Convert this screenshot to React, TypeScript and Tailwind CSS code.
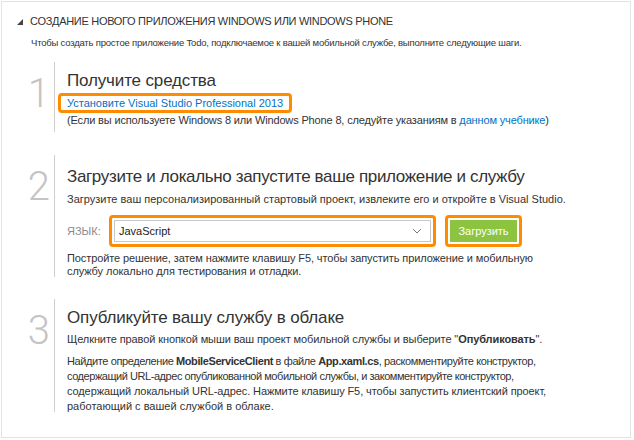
import React from 'react';

const font = { fontFamily: '"Liberation Sans", Arial, sans-serif' };

function Step({ n, children, lineH, pt }: { n: string; children: React.ReactNode; lineH: string; pt: string }) {
  return (
    <div className="flex">
      <div className={`w-[39px] shrink-0 border-r border-[#cfcfcf] pr-[4px] text-right ${lineH}`}>
        <span
          className="inline-block mt-[10px] text-[40px] font-light leading-[44px] text-[#c4c4c4]"
          style={{ fontFamily: 'Roboto, sans-serif' }}
        >
          {n}
        </span>
      </div>
      <div className={`pl-[12px] ${pt} text-[11px] leading-[14px] text-[#333]`}>{children}</div>
    </div>
  );
}

export default function App() {
  return (
    <div className="w-[634px] h-[440px] bg-white p-[1px]" style={font}>
      <div className="h-[437px] w-[630px] border border-[#e3e3e3] pl-[14px] pt-[10px]">
        <div className="flex items-center gap-[6px] text-[11px] leading-[18px] tracking-[-0.3px] text-[#333]">
          <svg width="8" height="8" viewBox="0 0 8 8" className="mt-[1px]">
            <polygon points="7,1 7,7 1,7" fill="#444" />
          </svg>
          <span>СОЗДАНИЕ НОВОГО ПРИЛОЖЕНИЯ WINDOWS ИЛИ WINDOWS PHONE</span>
        </div>
        <p className="pl-[15px] mt-[6px] whitespace-nowrap text-[9.5px] leading-[14px] tracking-[-0.2px] text-[#333]">
          Чтобы создать простое приложение Todo, подключаемое к вашей мобильной службе, выполните следующие шаги.
        </p>

        <div className="mt-[12px] flex flex-col">
          <Step n="1" lineH="h-[70px]" pt="pt-[8px]">
            <h2 className="text-[17px] leading-[22px] tracking-[-0.15px] text-[#333]">Получите средства</h2>
            <div className="mt-[1px] -ml-[9px] inline-block rounded-[4px] border-[3px] border-[#ff8c00] px-[6px] leading-[14px] text-[#0072c6]">
              Установите Visual Studio Professional 2013
            </div>
            <p className="whitespace-nowrap tracking-[-0.15px]">
              (Если вы используете Windows 8 или Windows Phone 8, следуйте указаниям в{' '}
              <span className="text-[#0072c6]">данном учебнике</span>)
            </p>
          </Step>

          <div className="h-[23px]" />

          <Step n="2" lineH="h-[122px]" pt="pt-[11px]">
            <h2 className="text-[17px] leading-[22px] tracking-[-0.35px] text-[#333]">
              Загрузите и локально запустите ваше приложение и службу
            </h2>
            <p className="mt-[4px] whitespace-nowrap">
              Загрузите ваш персонализированный стартовый проект, извлеките его и откройте в Visual Studio.
            </p>
            <div className="mt-[9px] flex items-center">
              <span className="w-[42px] text-[#8a8a8a]">ЯЗЫК:</span>
              <div className="rounded-[4px] border-[3px] border-[#ff8c00] p-[2px]">
                <div className="flex h-[22px] w-[317px] items-center justify-between border border-[#c8c8c8] bg-white pl-[4px] pr-[8px] text-[#222]">
                  <span>JavaScript</span>
                  <svg width="10" height="6" viewBox="0 0 10 6">
                    <polyline points="1,1 5,5 9,1" fill="none" stroke="#777" strokeWidth="1" />
                  </svg>
                </div>
              </div>
              <div className="ml-[9px] rounded-[4px] border-[3px] border-[#ff8c00] p-[2px]">
                <div className="flex h-[22px] w-[67px] items-center justify-center bg-[#8cc43f] text-white">Загрузить</div>
              </div>
            </div>
            <p className="mt-[5px] whitespace-nowrap leading-[13px] tracking-[-0.1px]">
              Постройте решение, затем нажмите клавишу F5, чтобы запустить приложение и мобильную
              <br />
              службу локально для тестирования и отладки.
            </p>
          </Step>

          <div className="h-[21px]" />

          <Step n="3" lineH="h-[113px]" pt="pt-[8px]">
            <h2 className="text-[17px] leading-[22px] tracking-[-0.15px] text-[#333]">Опубликуйте вашу службу в облаке</h2>
            <p className="mt-[3px] whitespace-nowrap tracking-[-0.1px]">
              Щелкните правой кнопкой мыши ваш проект мобильной службы и выберите "<b>Опубликовать</b>".
            </p>
            <div className="mt-[8px] whitespace-nowrap leading-[15px]">
              <p className="tracking-[-0.4px]">
                Найдите определение <b>MobileServiceClient</b> в файле <b>App.xaml.cs</b>, раскомментируйте конструктор,
              </p>
              <p className="tracking-[-0.45px]">
                содержащий URL-адрес опубликованной мобильной службы, и закомментируйте конструктор,
              </p>
              <p className="tracking-[-0.1px]">
                содержащий локальный URL-адрес. Нажмите клавишу F5, чтобы запустить клиентский проект,
              </p>
              <p>работающий с вашей службой в облаке.</p>
            </div>
          </Step>
        </div>
      </div>
    </div>
  );
}
